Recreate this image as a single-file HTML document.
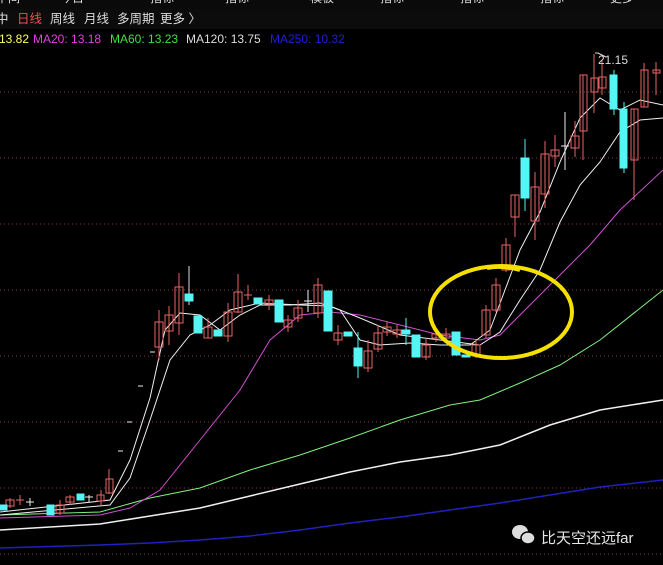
<!DOCTYPE html>
<html><head><meta charset="utf-8"><style>
body{margin:0;width:663px;height:565px;background:#000;overflow:hidden;font-family:"Liberation Sans","Noto Sans CJK SC",sans-serif}
</style></head><body>
<svg width="663" height="565" xmlns="http://www.w3.org/2000/svg" style="position:absolute;left:0;top:0">
<rect width="663" height="565" fill="#000"/>
<rect width="663" height="9" fill="#0a0a0a"/>
<g fill="#ddd" font-size="12"><text x="-4" y="2">中间</text><text x="60" y="2">今日</text><text x="150" y="2">指标</text><text x="225" y="2">指标</text><text x="310" y="2">模板</text><text x="380" y="2">指标</text><text x="460" y="2">指标</text><text x="540" y="2">指标</text><text x="610" y="2">更多</text></g>
<rect y="9" width="663" height="20" fill="#0c0c0c"/>
<g font-size="12.5"><text x="-4" y="23" fill="#ddd">中</text><text x="17" y="23" fill="#f05050">日线</text><text x="50" y="23" fill="#ddd">周线</text><text x="84" y="23" fill="#ddd">月线</text><text x="117" y="23" fill="#ddd">多周期</text><text x="160" y="23" fill="#ddd">更多 〉</text></g>
<g font-size="12"><text x="-1" y="43" fill="#ffff60">13.82</text><text x="33" y="43" fill="#e040e0">MA20: 13.18</text><text x="110" y="43" fill="#40e040">MA60: 13.23</text><text x="186" y="43" fill="#ddd">MA120: 13.75</text><text x="270" y="43" fill="#2020d0">MA250: 10.32</text></g>
<g stroke="#7a3a3a" stroke-dasharray="1,3" stroke-width="1">
<line x1="0" y1="92" x2="663" y2="92"/><line x1="0" y1="158" x2="663" y2="158"/><line x1="0" y1="224" x2="663" y2="224"/><line x1="0" y1="290" x2="663" y2="290"/><line x1="0" y1="356" x2="663" y2="356"/><line x1="0" y1="422" x2="663" y2="422"/><line x1="0" y1="488" x2="663" y2="488"/><line x1="0" y1="554" x2="663" y2="554"/></g>
<g fill="none" stroke-width="1">
<polyline stroke="#2020c0" stroke-width="1.5" points="0,548 100,545 150,543 200,540 250,536 300,530 350,523 400,517 450,510 500,503 550,495 600,487 663,480"/>
<polyline stroke="#f0f0f0" stroke-width="1.5" points="0,530 100,524 150,516 200,508 250,496 300,484 350,472 400,462 450,455 500,445 550,425 600,410 663,400"/>
<polyline stroke="#80f080" points="0,515 100,512 150,498 200,488 250,470 300,455 350,438 400,420 450,405 480,400 520,383 560,365 600,340 663,290"/>
<polyline stroke="#d050d0" points="0,518 100,515 130,508 160,490 200,440 240,390 270,340 300,315 330,312 360,315 400,325 440,335 480,340 500,335 530,305 560,275 590,245 620,210 663,170"/>
<polyline stroke="#f0f0f0" points="0,515 110,505 130,478 150,420 170,360 190,335 210,325 230,310 260,303 300,305 330,306 360,318 400,335 440,340 480,345 500,332 520,300 540,270 560,222 580,185 600,162 620,132 640,120 663,118"/>
<polyline stroke="#f0f0f0" points="0,512 110,500 130,460 150,398 165,330 180,313 200,315 220,330 240,315 260,305 290,305 320,303 340,310 360,340 380,345 410,343 440,345 470,345 490,330 505,290 520,250 540,212 560,162 580,118 600,98 620,110 640,100 663,105"/>
</g>
<g stroke="#e86464" fill="none" stroke-width="1">
<path d="M159 310V360M155 322h8v25h-8z"/><path d="M169 306V345M165 315h8v16h-8z"/><path d="M179 273V335M175 287h8v36h-8z"/>
<path d="M208 318V338M204 327h8v11h-8z"/><path d="M228 303V342M224 312h8v24h-8z"/><path d="M238 274V313M234 292h8v20h-8z"/>
<path d="M248 285V300M244 295h8"/><path d="M269 295V310M265 300h8v4h-8z"/><path d="M288 315V332M284 320h8v7h-8z"/><path d="M298 300V322M294 308h8v10h-8z"/>
<path d="M318 278V318M314 285h8v28h-8z"/><path d="M338 325V345M334 333h8v7h-8z"/><path d="M368 340V372M364 351h8v17h-8z"/><path d="M378 325V352M374 333h8v16h-8z"/>
<path d="M387 322V336M383 327h8v5h-8z"/><path d="M397 325V338M393 330h8v4h-8z"/><path d="M426 338V360M422 345h8v12h-8z"/><path d="M436 328V342M432 334h8v4h-8z"/><path d="M446 328V342M442 334h8v4h-8z"/><path d="M476 340V358M472 345h8v11h-8z"/>
<path d="M486 305V338M482 310h8v25h-8z"/><path d="M496 278V312M492 285h8v25h-8z"/><path d="M506 238V272M502 245h8v25h-8z"/>
<path d="M515 195V237M511 195h8v22h-8z"/><path d="M535 172V240M531 187h8v34h-8z"/><path d="M545 141V208M541 154h8v40h-8z"/><path d="M555 135V167M551 150h8v6h-8z"/><path d="M575 121V157M571 136h8v12h-8z"/>
<path d="M583 75V160M580 75h7v56h-7z"/><path d="M594 54V113M591 78h7v14h-7z"/><path d="M602 60V95M599 77h7v11h-7z"/><path d="M634 109V200M631 109h7v51h-7z"/><path d="M644 63V107M641 70h7v37h-7z"/><path d="M656 62V95M653 70h7v3h-7z"/>
<path d="M10 498V508M6 500h8v6h-8z"/><path d="M20 495V505M16 500h8"/><path d="M60 500V515M56 505h8v8h-8z"/><path d="M70 495V505M66 497h8v5h-8z"/><path d="M101 490V505M97 495h7v6h-7z"/><path d="M109 469V494M106 479h7v14h-7z"/></g>
<g fill="#55f5f5" stroke="#55f5f5">
<path d="M189 266V305" stroke="#ddd"/><rect x="185" y="294" width="8" height="7"/><rect x="194" y="316" width="8" height="17"/><rect x="214" y="330" width="8" height="6"/><rect x="254" y="298" width="8" height="6"/><rect x="275" y="300" width="8" height="22"/>
<rect x="324" y="291" width="8" height="40"/><rect x="344" y="332" width="8" height="4"/><path d="M358 332V378"/><rect x="354" y="348" width="8" height="18"/><path d="M406 318V345"/><rect x="402" y="330" width="8" height="4"/><rect x="412" y="335" width="8" height="22"/>
<rect x="452" y="332" width="8" height="23"/><rect x="462" y="355" width="8" height="2"/><path d="M525 139V211"/><rect x="521" y="158" width="8" height="40"/><path d="M614 70V115"/><rect x="610" y="75" width="7" height="34"/><path d="M624 102V173"/><rect x="620" y="109" width="7" height="59"/>
<rect x="0" y="505" width="7" height="5"/><rect x="47" y="505" width="7" height="10"/><rect x="77" y="494" width="7" height="6"/></g>
<g stroke="#eee"><path d="M308 290V312M304 301h8M565 112V170M561 146h8M30 498V506M26 502h8M89 495V502M85 497h8M150 352H155M138 386h5M127 422h5M118 451h5"/></g>
<text x="598" y="64" fill="#ddd" font-size="12">21.15</text>
<path d="M595 53h3l8 4" stroke="#ddd" fill="none"/>
<ellipse cx="501" cy="312" rx="71" ry="46" fill="none" stroke="#f5e000" stroke-width="4"/>
<path d="M487 268q15-3 33 2" stroke="#f5e000" stroke-width="4" fill="none"/>
<g fill="#ddd"><ellipse cx="520" cy="532" rx="8" ry="7"/><ellipse cx="528" cy="538" rx="7" ry="6" stroke="#000" stroke-width="1.5"/></g>
<text x="541" y="543" fill="#e6e6e6" font-size="15">比天空还远far</text>
</svg>
</body></html>
